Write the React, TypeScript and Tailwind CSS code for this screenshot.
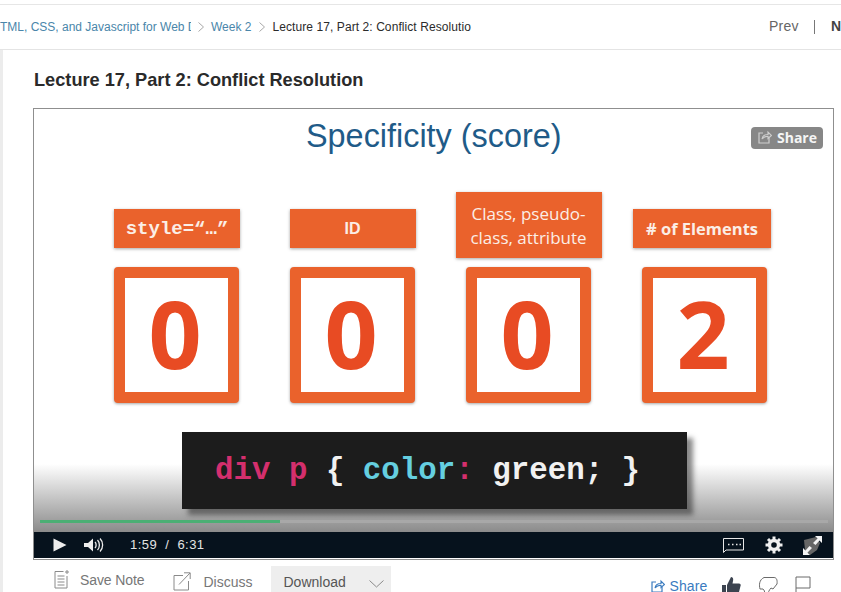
import React from "react";

const sans = "font-['Liberation_Sans',Arial,sans-serif]";
const open = "font-['Open_Sans',sans-serif]";
const mono = "font-['Liberation_Mono',monospace]";

function Chevron() {
  return (
    <svg width="6" height="10" viewBox="0 0 6 10" className="shrink-0">
      <path d="M0.5 0.5 L5.5 5 L0.5 9.5" fill="none" stroke="#a8a8a8" strokeWidth="1" />
    </svg>
  );
}

function ShareIcon({ color, size = 14 }: { color: string; size?: number }) {
  return (
    <svg width={size} height={size} viewBox="0 0 14 14" className="shrink-0">
      <path d="M5 3 H1 V13 H11 V8" fill="none" stroke={color} strokeWidth="1.2" />
      <path d="M4 9 C4.5 5.5 7 4.5 10 4.5 V2 L13.5 5.5 L10 8.5 V6.2 C7.5 6.2 5.5 7 4 9 Z" fill="none" stroke={color} strokeWidth="1.1" />
    </svg>
  );
}

function Card({ label, labelClass, digit, tall }: { label: React.ReactNode; labelClass: string; digit: string; tall?: boolean }) {
  return (
    <div className="flex w-[125px] flex-col items-center">
      <div className={`flex shrink-0 items-center justify-center bg-[#ea622c] pt-[1px] text-center text-[#fbeee6] shadow-[0_1px_3px_rgba(0,0,0,0.35)] ${tall ? "h-[66px]" : "mt-[17px] h-[39px]"} ${labelClass}`}>
        {label}
      </div>
      <div className={`flex h-[136px] w-[125px] shrink-0 items-center justify-center rounded-[4px] border-[11px] border-[#ea622c] bg-white pr-[3px] pb-[4px] shadow-[0_1px_3px_rgba(0,0,0,0.35)] ${tall ? "mt-[9px]" : "mt-[19px]"}`}>
        <span className={`${open} text-[93px] leading-none font-bold text-[#e84b23]`}>{digit}</span>
      </div>
    </div>
  );
}

export default function App() {
  return (
    <div className={`${sans} flex h-[592px] w-[841px] flex-col overflow-hidden bg-white`}>
      <div className="h-[5px] shrink-0 border-b border-[#e6e6e6]" />
      <header className="flex h-[45px] shrink-0 items-center border-b border-[#e4e4e4] pb-[1px] text-[12px]">
        <span className="w-[191px] shrink-0 overflow-hidden whitespace-nowrap text-[#4a86aa]">TML, CSS, and Javascript for Web D</span>
        <span className="mx-[7px]"><Chevron /></span>
        <span className="text-[#4a86aa]">Week 2</span>
        <span className="mr-[7px] ml-[8px]"><Chevron /></span>
        <span className="shrink-0 whitespace-nowrap tracking-[0.08px] text-[#2b2b2b]">Lecture 17, Part 2: Conflict Resolutio</span>
        <span className="ml-auto text-[14px] tracking-[0.3px] text-[#666]">Prev</span>
        <span className="ml-[15px] h-[14px] w-px bg-[#777]" />
        <span className="ml-[16px] shrink-0 text-[14px] font-bold text-[#444]">N</span>
      </header>
      <div className="flex min-h-0 flex-1 border-l-[3px] border-[#ececec]">
        <main className="min-w-0 flex-1 pl-[30px]">
          <h1 className="mt-[20px] ml-[1px] text-[18.2px] leading-[21px] font-bold text-[#2a2a2a]">Lecture 17, Part 2: Conflict Resolution</h1>
          <section className="relative mt-[17px] h-[452px] w-[801px] border border-[#8f8f8f] bg-white">
            <div className="relative flex h-[423px] flex-col overflow-hidden bg-[linear-gradient(to_bottom,#ffffff_0,#ffffff_355px,#8b8b8b_100%)]">
              <h2 className="mt-[4px] ml-[272px] text-[32.4px] leading-[46px] whitespace-nowrap text-[#1f5b88]">Specificity (score)</h2>
              <div className="mt-[33px] ml-[80px] flex gap-[51px]">
                <Card digit="0" labelClass={`${mono} ml-[1px] w-[126px] text-[19px] font-bold`} label="style=“…”" />
                <Card digit="0" labelClass="w-[126px] text-[16px] font-bold" label="ID" />
                <Card digit="0" tall labelClass={`${open} w-[146px] text-[17px] leading-[24px]`} label={<span>Class, pseudo-<br />class, attribute</span>} />
                <Card digit="2" labelClass={`${open} mr-[5px] w-[138px] text-[16.5px] font-bold`} label="# of Elements" />
              </div>
              <div className={`${mono} mt-[29px] ml-[148px] flex h-[77px] w-[505px] shrink-0 items-center whitespace-pre bg-[#1c1c1c] pt-[1px] pl-[33px] text-[30.8px] font-bold text-[#f1f1f1] shadow-[6px_6px_5px_rgba(40,40,40,0.55)]`}>
                <span className="text-[#d42f6d]">div p</span>
                <span> {"{"} </span>
                <span className="text-[#65cfe0]">color</span>
                <span className="text-[#d42f6d]">:</span>
                <span> green; {"}"}</span>
              </div>
              <div className="absolute right-[5px] bottom-[9px] left-[6px] h-[3px] bg-[#a8a8a8]">
                <div className="h-full w-[240px] bg-[#4caf74]" />
              </div>
            </div>
            <div className="flex h-[26px] items-center bg-[#06121d] text-[#e4e4e4]">
              <svg width="14" height="14" viewBox="0 0 14 14" className="ml-[19px] shrink-0">
                <path d="M0.5 0.5 L13.5 7 L0.5 13.5 Z" fill="#ededed" />
              </svg>
              <svg width="20" height="16" viewBox="0 0 20 16" className="ml-[17px] shrink-0">
                <path d="M0 6 H4 L9 1.5 V14.5 L4 10 H0 Z" fill="#ededed" />
                <path d="M11 5 C12.5 6.5 12.5 9.5 11 11 M13.5 3 C16 5.5 16 10.5 13.5 13 M16 1.5 C19.5 5 19.5 11 16 14.5" fill="none" stroke="#ededed" strokeWidth="1.3" />
              </svg>
              <span className="ml-[26px] text-[13px] tracking-[0.45px] whitespace-pre">1:59  /  6:31</span>
              <svg width="21" height="15" viewBox="0 0 21 15" className="ml-auto shrink-0">
                <path d="M0.5 0.5 H20.5 V12 H3 L0.5 14.5 Z" fill="none" stroke="#e8e8e8" strokeWidth="1" />
                <path d="M5 6.5 H6.5 M9 6.5 H10.5 M13 6.5 H14.5 M16.5 6.5 H18" stroke="#e8e8e8" strokeWidth="1.4" />
              </svg>
              <svg width="18" height="18" viewBox="0 0 18 18" className="ml-[21px] shrink-0">
                <circle cx="9" cy="9" r="4.5" fill="none" stroke="#f0f0f0" strokeWidth="3.4" />
                <path d="M9 0.5 V3.5 M9 14.5 V17.5 M0.5 9 H3.5 M14.5 9 H17.5 M3 3 L5 5 M13 13 L15 15 M15 3 L13 5 M5 13 L3 15" stroke="#f0f0f0" strokeWidth="3" />
              </svg>
              <svg width="21" height="21" viewBox="0 0 21 21" className="mr-[10px] ml-[19px] shrink-0">
                <path d="M2 5 L14 2 L18 8 L15 15 L8 20 L3 15 Z" fill="#666" />
                <path d="M20 1 H13 L15.5 3.5 L11 8 L13.5 10 L17.5 5.5 L20 8 Z M1 20 H8 L5.5 17.5 L10 13 L7.5 11 L3.5 15.5 L1 13 Z" fill="#f4f4f4" />
              </svg>
            </div>
            <div className={`${open} absolute top-[18px] right-[10px] flex h-[22px] w-[72px] items-center rounded-[4px] bg-[#878787] pb-[2px] pl-[7px] text-[14px] font-bold text-[#f5f5f5]`}>
              <ShareIcon color="#cfcfcf" />
              <span className="ml-[5px]">Share</span>
            </div>
          </section>
          <div className="flex h-[25px] items-start text-[#777]">
            <div className="mt-[10px] ml-[21px] flex items-center">
              <svg width="16" height="19" viewBox="0 0 16 19" className="shrink-0">
                <path d="M9.5 1.5 H1 V18 H13 V6" fill="none" stroke="#8a8a8a" />
                <path d="M3.5 6 H10.5 M3.5 9 H10.5 M3.5 12 H10.5 M3.5 15 H10.5" stroke="#8a8a8a" />
                <path d="M13 0 V4 M11 2 H15" stroke="#8a8a8a" />
              </svg>
              <span className="ml-[10px] text-[14px] leading-[18px] tracking-[-0.1px]">Save Note</span>
            </div>
            <div className="mt-[11px] ml-[29px] flex items-center">
              <svg width="18" height="19" viewBox="0 0 18 19" className="shrink-0">
                <path d="M10 3.5 H1 V18 H15.5 V9" fill="none" stroke="#8a8a8a" />
                <path d="M6 12.5 L17 1 M11 0.8 H17.2 V7" fill="none" stroke="#8a8a8a" />
              </svg>
              <span className="mt-[2px] ml-[12px] text-[14px] leading-[18px]">Discuss</span>
            </div>
            <div className="mt-[6px] ml-[18px] flex h-[30px] w-[120px] shrink-0 items-start bg-[#eeeeee] pt-[7px] pl-[12px] text-[14px] leading-[18px] text-[#555]">
              <span className="ml-[1px]">Download</span>
              <svg width="15" height="8" viewBox="0 0 15 8" className="mt-[7px] ml-[23px] shrink-0">
                <path d="M0.5 0.5 L7.5 7 L14.5 0.5" fill="none" stroke="#8a8a8a" />
              </svg>
            </div>
            <div className="mt-[17px] ml-[260px] flex items-center text-[14px] leading-[18px] text-[#3a7bbf]">
              <ShareIcon color="#3a7bbf" />
              <span className="ml-[5px] tracking-[0.1px]">Share</span>
            </div>
            <svg width="20" height="20" viewBox="0 0 20 20" className="mt-[16px] ml-[14px] shrink-0">
              <path d="M1 9 H5 V20 H1 Z M6 9 L10 1 C12 1 12.5 3 12 5 L11.5 7.5 H18 C19.5 7.5 20 9 19.5 10 L17.5 18 C17 19.5 16 20 15 20 H6 Z" fill="#3c4450" />
            </svg>
            <svg width="20" height="20" viewBox="0 0 20 20" className="mt-[16px] ml-[17px] shrink-0">
              <path d="M5 13 H2 C1 9 1 4 6 1.5 H16 C18.5 1.5 19.5 4 19 8 L15 13 L13 12 C11 14 10 17 9 20 C7 20 6 18 6.5 15 Z" fill="none" stroke="#6a6a6a" />
            </svg>
            <svg width="16" height="20" viewBox="0 0 16 20" className="mt-[16px] ml-[17px] shrink-0">
              <path d="M1 20 V1 H15 V12 H1" fill="none" stroke="#6a6a6a" />
            </svg>
          </div>
        </main>
      </div>
    </div>
  );
}
